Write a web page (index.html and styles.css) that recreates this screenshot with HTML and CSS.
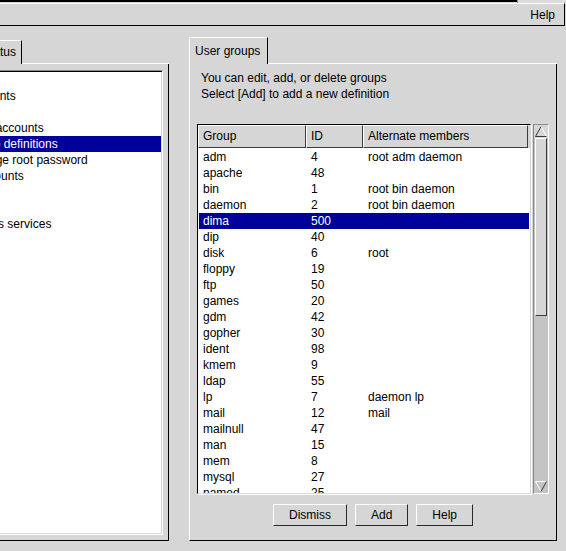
FILE: index.html
```html
<!DOCTYPE html>
<html>
<head>
<meta charset="utf-8">
<title>User groups</title>
<link rel="stylesheet" href="styles.css">
</head>
<body>
<div class="topstrip"><div class="edge"></div><div class="edge-btn"></div></div>
<div class="menubar"><span class="menu">Help</span></div>
<div class="main">
  <div class="notebook nb-left">
    <div class="tabrow">
      <div class="tab tab-back tab-config">Config</div>
      <div class="tab tab-back tab-control">Control</div>
      <div class="tab tab-status">Status</div>
      <div class="tabfill"></div>
    </div>
    <div class="panel panel-left">
      <ul class="tree">
        <li class="l0">Config</li>
        <li class="l1">Users accounts</li>
        <li class="l2">Normal</li>
        <li class="l3">User accounts</li>
        <li class="l3 sel">Group definitions</li>
        <li class="l3">Change root password</li>
        <li class="l1">Special accounts</li>
        <li class="l1">Policies</li>
        <li class="l0">Networking</li>
        <li class="l1b">Miscellaneous services</li>
      </ul>
    </div>
  </div>
  <div class="notebook nb-right">
    <div class="tabrow">
      <div class="tab tab-groups">User groups</div>
      <div class="tabfill"></div>
    </div>
    <div class="panel panel-right">
      <div class="intro">
        <div>You can edit, add, or delete groups</div>
        <div>Select [Add] to add a new definition</div>
      </div>
      <div class="listarea">
        <div class="table">
          <div class="thead">
            <div class="th">Group</div>
            <div class="th">ID</div>
            <div class="th">Alternate members</div>
          </div>
          <div class="tbody">
            <div class="tr"><span>adm</span><span>4</span><span>root adm daemon</span></div>
            <div class="tr"><span>apache</span><span>48</span><span></span></div>
            <div class="tr"><span>bin</span><span>1</span><span>root bin daemon</span></div>
            <div class="tr"><span>daemon</span><span>2</span><span>root bin daemon</span></div>
            <div class="tr sel"><span>dima</span><span>500</span><span></span></div>
            <div class="tr"><span>dip</span><span>40</span><span></span></div>
            <div class="tr"><span>disk</span><span>6</span><span>root</span></div>
            <div class="tr"><span>floppy</span><span>19</span><span></span></div>
            <div class="tr"><span>ftp</span><span>50</span><span></span></div>
            <div class="tr"><span>games</span><span>20</span><span></span></div>
            <div class="tr"><span>gdm</span><span>42</span><span></span></div>
            <div class="tr"><span>gopher</span><span>30</span><span></span></div>
            <div class="tr"><span>ident</span><span>98</span><span></span></div>
            <div class="tr"><span>kmem</span><span>9</span><span></span></div>
            <div class="tr"><span>ldap</span><span>55</span><span></span></div>
            <div class="tr"><span>lp</span><span>7</span><span>daemon lp</span></div>
            <div class="tr"><span>mail</span><span>12</span><span>mail</span></div>
            <div class="tr"><span>mailnull</span><span>47</span><span></span></div>
            <div class="tr"><span>man</span><span>15</span><span></span></div>
            <div class="tr"><span>mem</span><span>8</span><span></span></div>
            <div class="tr"><span>mysql</span><span>27</span><span></span></div>
            <div class="tr"><span>named</span><span>25</span><span></span></div>
          </div>
        </div>
        <div class="vscroll">
          <div class="sb-up"><svg width="12" height="11" viewBox="0 0 12 11"><polyline points="0.5,10.5 6,0.5" fill="none" stroke="#3a3a3a" stroke-width="1"/><polyline points="6,0.5 11.5,10.5" fill="none" stroke="#ffffff" stroke-width="1"/><line x1="0.5" y1="10.5" x2="11.5" y2="10.5" stroke="#3a3a3a" stroke-width="1"/></svg></div>
          <div class="sb-thumb"></div>
          <div class="sb-track"></div>
          <div class="sb-down"><svg width="12" height="11" viewBox="0 0 12 11"><line x1="0.5" y1="0.5" x2="11.5" y2="0.5" stroke="#ffffff" stroke-width="1"/><polyline points="0.5,0.5 6,10.5" fill="none" stroke="#ffffff" stroke-width="1"/><polyline points="11.5,0.5 6,10.5" fill="none" stroke="#3a3a3a" stroke-width="1"/></svg></div>
        </div>
      </div>
      <div class="buttons">
        <button class="btn">Dismiss</button>
        <button class="btn">Add</button>
        <button class="btn">Help</button>
      </div>
    </div>
  </div>
</div>
</body>
</html>
```

FILE: styles.css
```css
* { box-sizing: border-box; }
html, body {
  margin: 0;
  padding: 0;
  background: #d6d6d6;
  width: 566px;
  height: 551px;
  overflow: hidden;
  font-family: "Liberation Sans", Arial, Helvetica, sans-serif;
  font-size: 12px;
  color: #000;
}
.topstrip {
  display: flex;
  height: 3px;
}
.edge {
  flex: 1;
  height: 2px;
  background: #000;
}
.edge-btn {
  width: 49px;
  height: 3px;
  border-left: 1px solid #8a8a8a;
  background: #dcdcdc;
}
.menubar {
  height: 23px;
  margin-right: 1px;
  border-top: 1px solid #fff;
  border-bottom: 1px solid #000;
  border-right: 1px solid #000;
  display: flex;
  justify-content: flex-end;
  align-items: center;
  padding-right: 9px;
}
.menu { line-height: 16px; }
.main {
  display: flex;
  gap: 20px;
  margin-top: 11px;
}
.notebook {
  display: flex;
  flex-direction: column;
}
.nb-left {
  margin-left: -140px;
  width: 309px;
}
.nb-right {
  width: 368px;
}
.tabrow {
  display: flex;
  align-items: flex-end;
  height: 27px;
}
.nb-left .tabrow { padding-left: 2px; }
.tab {
  border-top: 1px solid #fff;
  border-left: 1px solid #fff;
  border-right: 1px solid #000;
  line-height: 16px;
  white-space: nowrap;
}
.tab-back {
  height: 22px;
  padding: 3px 0 0 6px;
  border-bottom: 1px solid #fff;
}
.tab-config { width: 55px; }
.tab-control { width: 58px; }
.tab-status {
  width: 47px;
  height: 24px;
  padding: 3px 0 0 6px;
}
.tab-groups {
  width: 79px;
  height: 27px;
  padding: 5px 0 0 5px;
}
.tabfill {
  flex: 1;
  border-bottom: 1px solid #fff;
}
.panel {
  border-left: 1px solid #fff;
  border-right: 1px solid #000;
  border-bottom: 1px solid #000;
}
.panel-left {
  height: 477px;
  padding: 6px 5px 5px 5px;
}
.tree {
  list-style: none;
  margin: 0;
  padding: 1px 0 0 0;
  height: 465px;
  background: #fff;
  border: 1px solid;
  border-color: #8a8a8a #fff #fff #8a8a8a;
  box-shadow: inset 1px 1px 0 #000, inset -1px -1px 0 #d6d6d6;
  overflow: hidden;
}
.tree li {
  height: 16px;
  line-height: 16px;
  white-space: nowrap;
  margin-right: 1px;
}
.tree .l0 { padding-left: 33px; }
.tree .l1b { padding-left: 61px; }
.tree .l1 { padding-left: 66px; }
.tree .l2 { padding-left: 84px; }
.tree .l3 { padding-left: 100px; }
.tree .sel, .tr.sel {
  background: #00009a;
  color: #fff;
}
.panel-right {
  height: 477px;
  padding: 6px 7px 0 7px;
  display: flex;
  flex-direction: column;
}
.intro {
  padding-left: 4px;
  line-height: 16px;
}
.listarea {
  display: flex;
  gap: 2px;
  margin-top: 22px;
  height: 370px;
}
.table {
  width: 334px;
  height: 370px;
  border: 1px solid;
  border-color: #000 #d6d6d6 #d6d6d6 #000;
  box-shadow: 1px 1px 0 #fff;
  background: #fff;
  display: flex;
  flex-direction: column;
  overflow: hidden;
}
.thead {
  display: grid;
  grid-template-columns: 108px 57px 165px;
  background: #d6d6d6;
  height: 23px;
  flex: none;
}
.th {
  border: 1px solid;
  border-color: #fff #3c3c3c #3c3c3c #fff;
  padding-left: 4px;
  line-height: 21px;
  white-space: nowrap;
}
.tbody {
  padding-top: 1px;
  flex: 1;
  overflow: hidden;
}
.tr {
  display: grid;
  grid-template-columns: 108px 57px 165px;
  height: 16px;
  line-height: 16px;
  margin-left: 1px;
  width: 330px;
}
.tr span {
  padding-left: 4px;
  white-space: nowrap;
}
.vscroll {
  width: 16px;
  height: 370px;
  border: 1px solid;
  border-color: #8a8a8a #fff #fff #8a8a8a;
  background: #c3c3c3;
  display: flex;
  flex-direction: column;
}
.sb-up, .sb-down {
  height: 13px;
  display: flex;
  align-items: center;
  justify-content: center;
  flex: none;
}
.sb-up { background: #d6d6d6; }
.sb-thumb {
  height: 178px;
  flex: none;
  background: #d6d6d6;
  border-left: 1px solid #fff;
  border-top: 1px solid #fff;
  border-right: 1px solid #3a3a3a;
  border-bottom: 1px solid #3a3a3a;
  margin: 0 1px;
}
.sb-track { flex: 1; }
.buttons {
  display: flex;
  justify-content: center;
  gap: 8px;
  margin-top: 10px;
}
.btn {
  font-family: "Liberation Sans", Arial, Helvetica, sans-serif;
  font-size: 12px;
  color: #000;
  background: #d6d6d6;
  height: 22px;
  min-width: 53px;
  padding: 0 15px;
  line-height: 20px;
  border: 1px solid;
  border-color: #fff #2a2a2a #2a2a2a #fff;
  border-radius: 0;
  margin: 0;
}
```
